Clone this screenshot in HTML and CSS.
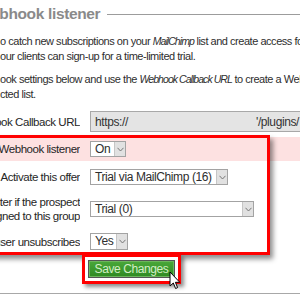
FILE: index.html
```html
<!DOCTYPE html>
<html lang="en">
<head>
    <meta charset="UTF-8">
    <title>Webhook listener</title>
    <link rel="stylesheet" href="styles.css">
</head>
<body>
<div id="page">
    <h3 class="title"><span>Webhook listener</span></h3>
    <p class="desc">o catch new subscriptions on your <em>MailChimp</em> list and create access for<br>our clients can sign-up for a time-limited trial.</p>
    <p class="desc">ook settings below and use the <em>Webhook Callback URL</em> to create a Webhook<br>cted list.</p>

    <div class="row row-url">
        <div class="label"><span>Webhook Callback URL</span></div>
        <div class="url"><span>https://</span><span class="url-end">'/plugins/</span></div>
    </div>
    <div class="row row-on">
        <div class="label"><span>Webhook listener</span></div>
        <span class="select sel-on"><span class="val">On</span><span class="arr"><svg width="7" height="5" viewBox="0 0 7 5"><path d="M0.5 0.8 L3.5 4 L6.5 0.8" fill="none" stroke="#777" stroke-width="1"/></svg></span></span>
    </div>
    <div class="row row-offer">
        <div class="label"><span>Activate this offer</span></div>
        <span class="select sel-offer"><span class="val">Trial via MailChimp (16)</span><span class="arr"><svg width="7" height="5" viewBox="0 0 7 5"><path d="M0.5 0.8 L3.5 4 L6.5 0.8" fill="none" stroke="#777" stroke-width="1"/></svg></span></span>
    </div>
    <div class="row row-group">
        <div class="label"><span>Only register if the prospect<br>is assigned to this group</span></div>
        <span class="select sel-group"><span class="val">Trial (0)</span><span class="arr"><svg width="7" height="5" viewBox="0 0 7 5"><path d="M0.5 0.8 L3.5 4 L6.5 0.8" fill="none" stroke="#777" stroke-width="1"/></svg></span></span>
    </div>
    <div class="row row-unsub">
        <div class="label"><span>When a user unsubscribes</span></div>
        <span class="select sel-yes"><span class="val">Yes</span><span class="arr"><svg width="7" height="5" viewBox="0 0 7 5"><path d="M0.5 0.8 L3.5 4 L6.5 0.8" fill="none" stroke="#777" stroke-width="1"/></svg></span></span>
    </div>
    <div class="save-row">
        <div class="save-wrap"><button class="btn">Save Changes</button></div>
    </div>
    <div class="rule"></div>

    <!-- red annotation round the settings -->
    <div class="mark"></div>
    <svg class="cursor" width="12" height="19" viewBox="0 0 12 19"><path d="M1 1 L1 15 L4.3 12 L6.6 17.5 L8.6 16.6 L6.4 11.3 L10.8 11.3 Z" fill="#fff" stroke="#000" stroke-width="1" stroke-linejoin="round"/></svg>
</div>
</body>
</html>
```

FILE: styles.css
```css
*{margin: 0;padding: 0;box-sizing: border-box;}
body{font-family: "Liberation Sans", Arial, sans-serif;font-size: 11px;letter-spacing: -0.4px;color: #2e2e2e;background: #fff;overflow: hidden;}
#page{width: 300px;height: 300px;position: relative;overflow: hidden;}

.title{display: flex;align-items: center;margin: 4px 0 0 -23px;font-size: 15.5px;line-height: 20px;letter-spacing: -0.35px;color: #8a8a8a;white-space: nowrap;}
.title:after{content: "";flex: 1;height: 1px;background: #9c9c9c;margin-left: 7px;}

.desc{line-height: 15px;white-space: nowrap;margin-top: 10px;letter-spacing: -0.47px;}
.desc + .desc{margin-top: 8px;}
.desc em{font-size: 10.5px;letter-spacing: -0.95px;}

.row{display: flex;align-items: center;}
.label{width: 80px;flex: none;display: flex;justify-content: flex-end;overflow: hidden;margin-right: 10px;white-space: nowrap;text-align: right;line-height: 14px;font-size: 11.5px;letter-spacing: -0.45px;color: #262626;}
.label span{flex: none;}

.row-url{margin-top: 9px;}
.url{width: 222px;flex: none;height: 21px;display: flex;align-items: center;justify-content: space-between;padding: 0 13px 0 4px;background: #e4e4e4;border: 1px solid #a8a8a8;border-right: none;font-size: 12px;color: #333;}

.row-on{margin-top: 5px;height: 24px;background: #fde1e1;}
.row-offer{height: 32px;}
.row-group{height: 32px;}
.row-unsub{height: 33px;}

.select{display: inline-flex;height: 16px;border: 1px solid #a3a3a3;background: #fff;font-size: 12px;}
.select .val{flex: 1;padding: 0 4px;line-height: 14px;white-space: nowrap;overflow: hidden;}
.select .arr{width: 11px;flex: none;background: #e1e1e1;border-left: 1px solid #c6c6c6;display: flex;align-items: center;justify-content: center;}
.sel-on{width: 36px;}
.sel-offer{width: 138px;}
.sel-group{width: 164px;}
.sel-yes{width: 38px;height: 17px;}

.save-row{margin-top: -4px;padding-left: 82px;}
.save-wrap{display: inline-block;position: relative;z-index: 2;border: 3px solid #f00;padding: 3px;background: #fff;box-shadow: 3px 3px 4px rgba(0,0,0,0.45);}
.btn{display: block;width: 87px;height: 18px;font-family: "Liberation Sans", Arial, sans-serif;font-size: 12px;letter-spacing: -0.4px;color: #d4eec6;background: linear-gradient(#4aa83a, #2e8a21);border: 1px solid #555;box-shadow: inset 0 0 0 1px #6cb65c;cursor: pointer;}

.rule{margin-top: 9px;height: 1px;background: #a8a8a8;}

.mark{position: absolute;left: -10px;top: 135px;width: 280px;height: 120px;border: 3px solid #f00;box-shadow: 3px 4px 5px rgba(0,0,0,0.45);pointer-events: none;}
.cursor{position: absolute;left: 169px;top: 271px;z-index: 3;}
```
